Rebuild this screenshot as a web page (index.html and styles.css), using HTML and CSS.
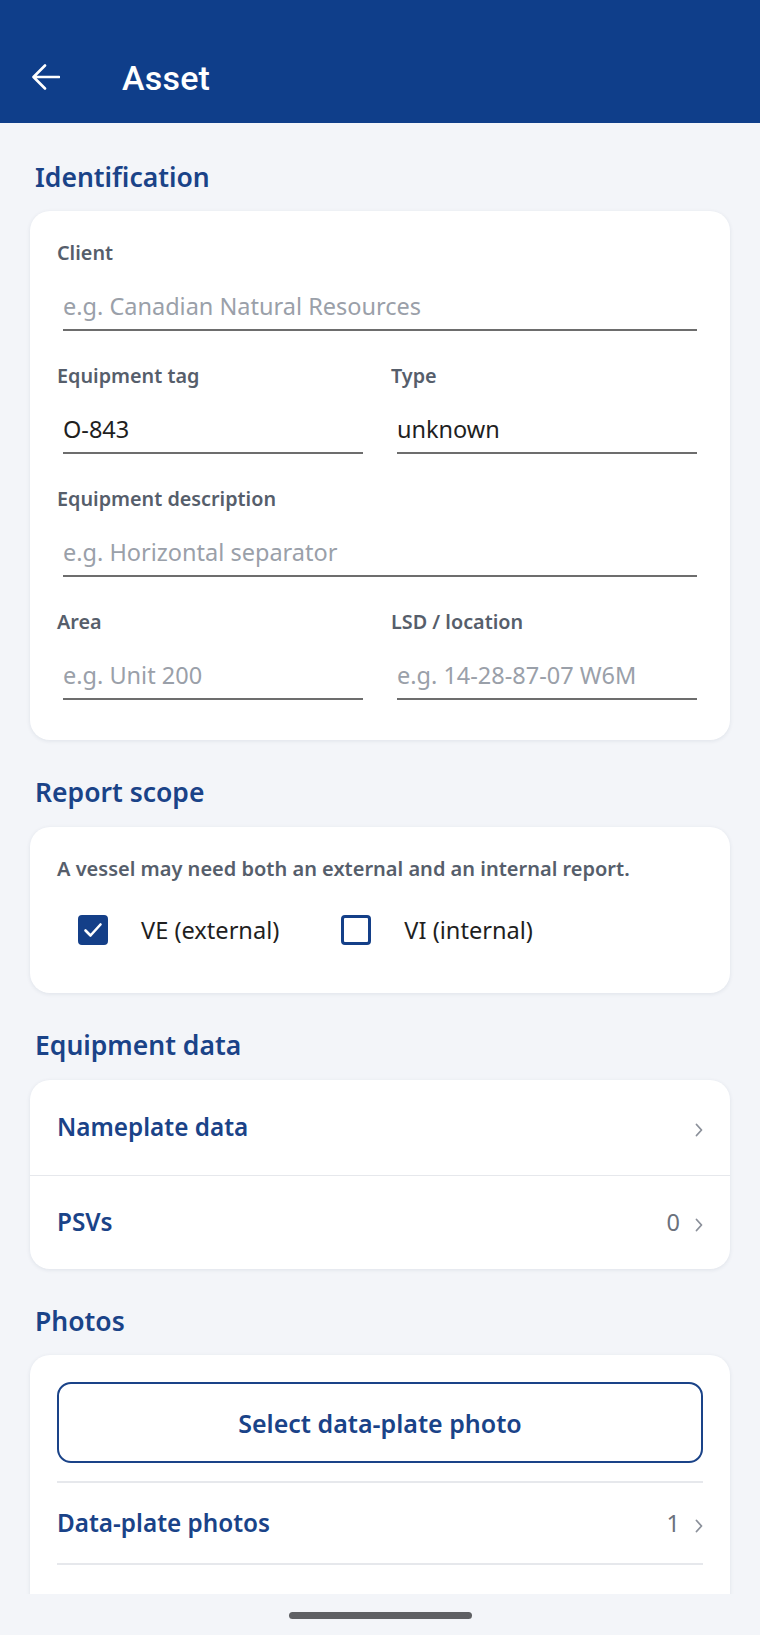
FILE: index.html
```html
<!DOCTYPE html>
<html lang="en">
<head>
    <meta charset="UTF-8">
    <meta name="viewport" content="width=device-width, initial-scale=1.0">
    <title>Asset</title>
    <link rel="stylesheet" href="styles.css">
</head>
<body>
    <div class="app">
        <div class="topbar">
            <button class="back" aria-label="Back">
                <svg width="28" height="26" viewBox="0 0 28 26">
                    <path d="M27 13H2M13 1.5L1.5 13L13 24.5" fill="none" stroke="#fff" stroke-width="2.6" stroke-linecap="round" stroke-linejoin="round"/>
                </svg>
            </button>
            <h1>Asset</h1>
        </div>

        <div class="content">
            <!-- Identificación -->
            <h2 class="section-title">Identification</h2>
            <div class="card form-card">
                <div class="field">
                    <label>Client</label>
                    <input type="text" placeholder="e.g. Canadian Natural Resources">
                </div>
                <div class="row">
                    <div class="field">
                        <label>Equipment tag</label>
                        <input type="text" value="O-843">
                    </div>
                    <div class="field">
                        <label>Type</label>
                        <input type="text" value="unknown">
                    </div>
                </div>
                <div class="field">
                    <label>Equipment description</label>
                    <input type="text" placeholder="e.g. Horizontal separator">
                </div>
                <div class="row">
                    <div class="field">
                        <label>Area</label>
                        <input type="text" placeholder="e.g. Unit 200">
                    </div>
                    <div class="field">
                        <label>LSD / location</label>
                        <input type="text" placeholder="e.g. 14-28-87-07 W6M">
                    </div>
                </div>
            </div>

            <!-- Alcance del informe -->
            <h2 class="section-title">Report scope</h2>
            <div class="card scope-card">
                <p class="hint">A vessel may need both an external and an internal report.</p>
                <div class="checks">
                    <label class="check">
                        <span class="box checked">
                            <svg width="20" height="16" viewBox="0 0 20 16">
                                <path d="M2.5 8.5L7.5 13.5L17.5 2.5" fill="none" stroke="#fff" stroke-width="2.6" stroke-linecap="round" stroke-linejoin="round"/>
                            </svg>
                        </span>
                        VE (external)
                    </label>
                    <label class="check">
                        <span class="box"></span>
                        VI (internal)
                    </label>
                </div>
            </div>

            <!-- Datos del equipo -->
            <h2 class="section-title">Equipment data</h2>
            <div class="card list-card">
                <div class="list-row">
                    <span class="row-title">Nameplate data</span>
                    <span class="row-end">
                        <svg class="chevron" width="8" height="14" viewBox="0 0 8 14"><path d="M1.5 1.5L6.5 7L1.5 12.5" fill="none" stroke="#8b909a" stroke-width="1.8" stroke-linecap="round" stroke-linejoin="round"/></svg>
                    </span>
                </div>
                <div class="list-row">
                    <span class="row-title">PSVs</span>
                    <span class="row-end">
                        <span class="count">0</span>
                        <svg class="chevron" width="8" height="14" viewBox="0 0 8 14"><path d="M1.5 1.5L6.5 7L1.5 12.5" fill="none" stroke="#8b909a" stroke-width="1.8" stroke-linecap="round" stroke-linejoin="round"/></svg>
                    </span>
                </div>
            </div>

            <!-- Fotos -->
            <h2 class="section-title">Photos</h2>
            <div class="card photo-card">
                <button class="outline-btn">Select data-plate photo</button>
                <div class="photo-row">
                    <span class="row-title">Data-plate photos</span>
                    <span class="row-end">
                        <span class="count">1</span>
                        <svg class="chevron" width="8" height="14" viewBox="0 0 8 14"><path d="M1.5 1.5L6.5 7L1.5 12.5" fill="none" stroke="#8b909a" stroke-width="1.8" stroke-linecap="round" stroke-linejoin="round"/></svg>
                    </span>
                </div>
                <div class="photo-row"></div>
            </div>
        </div>

        <div class="navbar">
            <span class="pill"></span>
        </div>
    </div>
</body>
</html>
```
FILE: styles.css
```css
* {
    margin: 0;
    padding: 0;
    box-sizing: border-box;
}

body {
    font-family: "Noto Sans", "Open Sans", sans-serif;
    background-color: #f3f5f9;
    color: #1f1f1f;
}

.app {
    height: 1635px;
    display: flex;
    flex-direction: column;
}

/* Barra superior */
.topbar {
    height: 123px;
    flex-shrink: 0;
    background-color: #0f3e8a;
    display: flex;
    align-items: center;
    padding: 32px 0 0 32px;
}

.back {
    background: none;
    border: none;
    width: 28px;
    height: 26px;
    display: flex;
    margin-top: -2px;
}

.topbar h1 {
    font-family: Roboto, sans-serif;
    font-weight: 500;
    font-size: 34px;
    color: #fff;
    margin-left: 62px;
    letter-spacing: 0.2px;
}

/* Contenido con scroll */
.content {
    flex: 1;
    overflow: hidden;
    padding: 2px 30px 0;
}

.section-title {
    font-size: 26.5px;
    line-height: 36px;
    font-weight: 600;
    color: #1a4388;
    margin: 34px 0 16px 5px;
}

.card {
    background-color: #fff;
    border-radius: 20px;
    box-shadow: 0 1px 4px rgba(20, 40, 80, 0.09);
}

/* Formulario */
.form-card {
    padding: 30px 27px 40px;
    display: flex;
    flex-direction: column;
    gap: 33px;
}

.row {
    display: grid;
    grid-template-columns: 1fr 1fr;
    gap: 22px;
}

.field label {
    display: block;
    font-size: 19.8px;
    line-height: 24px;
    font-weight: 600;
    color: #565e6b;
}

.field input {
    display: block;
    width: calc(100% - 12px);
    margin: 26px 6px 0;
    border: none;
    border-bottom: 2px solid #6d6d6d;
    font-family: inherit;
    font-size: 23.5px;
    line-height: 30px;
    height: 40px;
    padding: 0 0 8px;
    color: #1f1f1f;
    background: none;
    outline: none;
}

.field input::placeholder {
    color: #9aa0a9;
}

/* Alcance */
.scope-card {
    padding: 30px 27px 47px;
    margin-top: 17px;
}

.hint {
    font-size: 20px;
    line-height: 24px;
    font-weight: 600;
    color: #565e6b;
}

.checks {
    display: flex;
    gap: 62px;
    margin-top: 33px;
    padding-left: 21px;
}

.check {
    display: flex;
    align-items: center;
    gap: 33px;
    font-size: 23.6px;
    color: #1f1f1f;
}

.box {
    width: 30px;
    height: 30px;
    border: 3px solid #143f88;
    border-radius: 4px;
    display: flex;
    align-items: center;
    justify-content: center;
}

.box.checked {
    background-color: #143f88;
}

/* Listas */
.list-card {
    margin-top: 17px;
}

.list-row {
    height: 94.5px;
    display: flex;
    align-items: center;
    justify-content: space-between;
    padding: 0 27px;
}

.list-row + .list-row {
    border-top: 1px solid #e6e8ec;
}

.row-title {
    font-size: 24.3px;
    line-height: 30px;
    font-weight: 600;
    color: #1a4388;
}

.row-end {
    display: flex;
    align-items: center;
    gap: 15px;
}

.count {
    font-size: 23.5px;
    color: #6b717c;
}

.chevron {
    margin-top: 6px;
}

/* Fotos */
.photo-card {
    padding: 27px 27px 0;
    height: 300px;
}

.outline-btn {
    width: 100%;
    height: 81px;
    border: 2px solid #1a4388;
    border-radius: 14px;
    background: #fff;
    font-family: inherit;
    font-size: 25px;
    font-weight: 600;
    color: #1a4388;
    margin-bottom: 18px;
}

.photo-row {
    height: 82px;
    display: flex;
    align-items: center;
    justify-content: space-between;
    border-top: 2px solid #e6e8ec;
}

/* Barra de navegación */
.navbar {
    height: 41px;
    flex-shrink: 0;
    display: flex;
    justify-content: center;
    padding-top: 18px;
}

.pill {
    width: 183px;
    height: 7px;
    border-radius: 4px;
    background-color: #5f6064;
}
```
